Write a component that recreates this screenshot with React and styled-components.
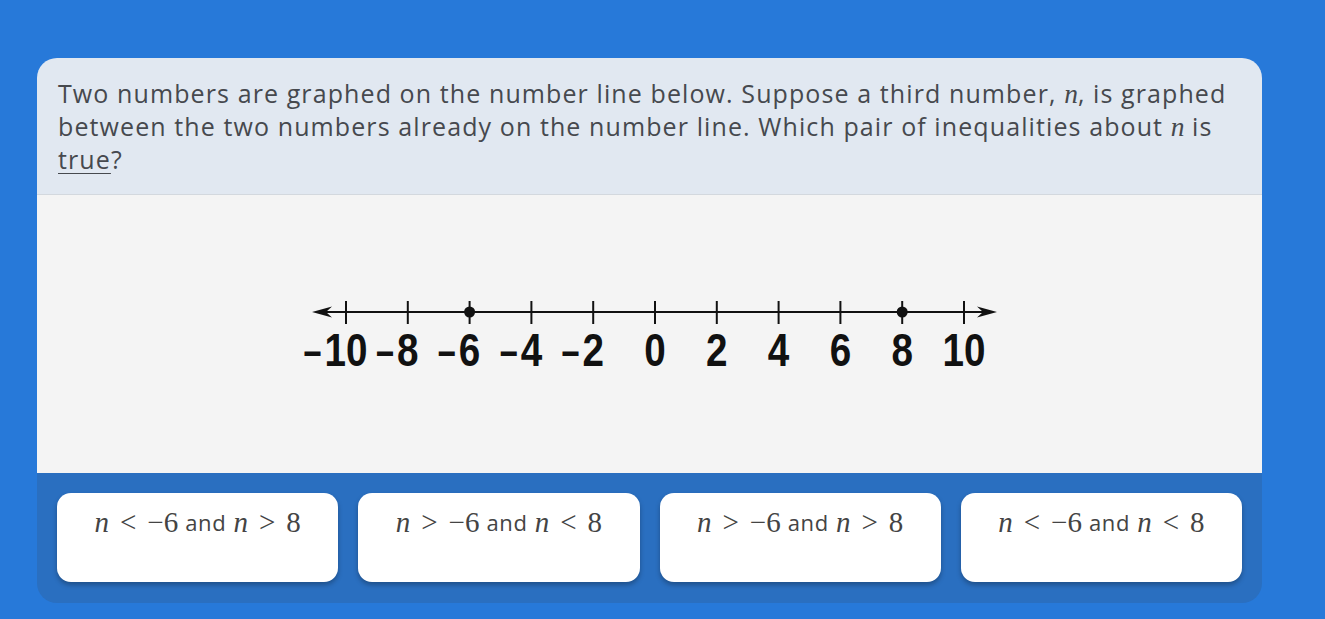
import React from "react";
import styled, { createGlobalStyle } from "styled-components";

const Global = createGlobalStyle`
  html, body { margin: 0; padding: 0; background: #2779d9; }
  body { width: 1325px; height: 619px; overflow: hidden; }
`;

const Page = styled.div`
  box-sizing: border-box;
  width: 1325px;
  height: 619px;
  padding: 58px 63px 16px 37px;
  background: #2779d9;
`;

const Card = styled.div`
  display: flex;
  flex-direction: column;
  height: 545px;
  border-radius: 20px;
  overflow: hidden;
`;

const Prompt = styled.div`
  background: #e1e8f1;
  border-bottom: 1px solid #d3d8de;
  padding: 19px 20px 19px 21px;
  font-family: "Open Sans", "Liberation Sans", sans-serif;
  font-size: 25px;
  line-height: 32px;
  letter-spacing: 1.1px;
  color: #46494e;
`;

const MathVar = styled.span`
  font-family: "Liberation Serif", "DejaVu Serif", serif;
  font-style: italic;
  font-size: 1.1em;
  letter-spacing: 0;
`;

const Under = styled.span`
  text-decoration: underline;
  text-underline-offset: 4px;
  text-decoration-thickness: 1px;
`;

const Stage = styled.div`
  flex: 1;
  background: #f4f4f4;
  display: flex;
  align-items: center;
  justify-content: center;
`;

const Choices = styled.div`
  background: #2a6fc0;
  display: flex;
  gap: 20px;
  padding: 20px 20px 21px;
`;

const Choice = styled.button`
  flex: 1;
  height: 89px;
  border: none;
  border-radius: 14px;
  background: #ffffff;
  box-shadow: 0 3px 5px rgba(0, 0, 0, 0.28);
  display: flex;
  justify-content: center;
  align-items: flex-start;
  padding: 14px 8px 0;
  font-family: "Open Sans", "Liberation Sans", sans-serif;
  font-size: 22px;
  line-height: 30px;
  letter-spacing: 0.7px;
  color: #444;
  cursor: pointer;
`;

const MathText = styled.span`
  font-family: "Liberation Serif", "DejaVu Serif", serif;
  font-size: 29px;
  letter-spacing: 0;
  color: #444;
`;

const Op = styled.span`
  margin: 0 11px;
`;

const Word = styled.span`
  margin: 0 7px;
`;

const ticks = [-10, -8, -6, -4, -2, 0, 2, 4, 6, 8, 10];
const X0 = 46;
const STEP = 61.8;
const DW = 21.5;
const LABEL_FONT = "Liberation Sans, Arial, sans-serif";

function NumberLine() {
  return (
    <svg width="700" height="72" viewBox="0 0 700 72">
      <line x1="20" y1="14" x2="690" y2="14" stroke="#111" strokeWidth="2" />
      <path d="M12 14 L32 8.5 L26 14 L32 19.5 Z" fill="#111" />
      <path d="M697 14 L677 8.5 L683 14 L677 19.5 Z" fill="#111" />
      {ticks.map((v, i) => {
        const x = X0 + i * STEP;
        const digits = String(Math.abs(v));
        const w = digits.length * DW;
        return (
          <g key={v}>
            <line x1={x} y1="3" x2={x} y2="26" stroke="#111" strokeWidth="2" />
            <text
              x={x - w / 2}
              y="68"
              textLength={w}
              lengthAdjust="spacingAndGlyphs"
              fontFamily={LABEL_FONT}
              fontWeight="700"
              fontSize="46"
              fill="#111"
            >
              {digits}
            </text>
            {v < 0 && (
              <text
                x={x - w / 2 - 21}
                y="68"
                textLength="18"
                lengthAdjust="spacingAndGlyphs"
                fontFamily={LABEL_FONT}
                fontWeight="700"
                fontSize="46"
                fill="#111"
              >
                –
              </text>
            )}
          </g>
        );
      })}
      <circle cx={X0 + 2 * STEP} cy="14" r="5.5" fill="#111" />
      <circle cx={X0 + 9 * STEP} cy="14" r="5.5" fill="#111" />
    </svg>
  );
}

const options = [
  ["<", "−6", ">", "8"],
  [">", "−6", "<", "8"],
  [">", "−6", ">", "8"],
  ["<", "−6", "<", "8"],
];

export default function App() {
  return (
    <Page>
      <Global />
      <Card>
        <Prompt>
          Two numbers are graphed on the number line below. Suppose a third number,{" "}
          <MathVar>n</MathVar>, is graphed between the two numbers already on the number line.
          Which pair of inequalities about <MathVar>n</MathVar> is <Under>true</Under>?
        </Prompt>
        <Stage>
          <NumberLine />
        </Stage>
        <Choices>
          {options.map((o, i) => (
            <Choice key={i}>
              <MathText>
                <i>n</i>
                <Op>{o[0]}</Op>
                {o[1]}
              </MathText>
              <Word>and</Word>
              <MathText>
                <i>n</i>
                <Op>{o[2]}</Op>
                {o[3]}
              </MathText>
            </Choice>
          ))}
        </Choices>
      </Card>
    </Page>
  );
}
